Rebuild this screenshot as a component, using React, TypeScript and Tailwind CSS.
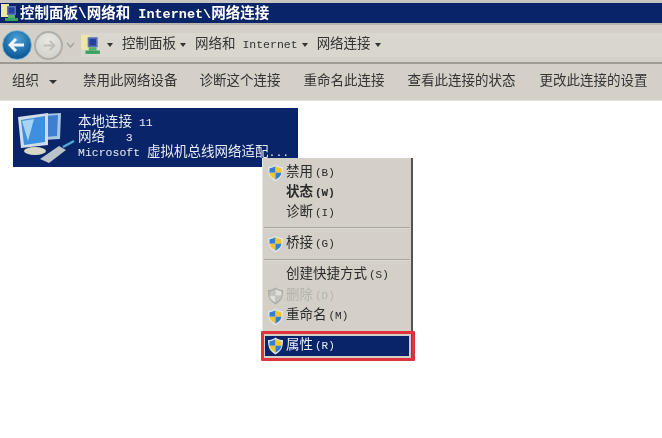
import React from "react";

const cjk = "font-['Liberation_Mono','Noto_Sans_CJK_SC',monospace]";

function Shield({ gray = false }: { gray?: boolean }) {
  const a = gray ? "#c4c2bc" : "#2f7fd6";
  const b = gray ? "#e0dfda" : "#f4c430";
  return (
    <svg width="17" height="18" viewBox="0 0 17 18" className="shrink-0 -ml-[1px]">
      <path d="M8.5 .5 C6 2.5 3.5 3 1 3 C1 9 2 14 8.5 17.5 C15 14 16 9 16 3 C13.5 3 11 2.5 8.5 .5Z" fill={gray ? "#aaa8a2" : "#dfe6ee"} />
      <path d="M8.5 2 C6.5 3.5 4.5 4 2.5 4.2 L2.5 8.8 L8.5 8.8Z" fill={a} />
      <path d="M8.5 2 C10.5 3.5 12.5 4 14.5 4.2 L14.5 8.8 L8.5 8.8Z" fill={b} />
      <path d="M2.6 8.8 L8.5 8.8 L8.5 15.8 C4.5 13.5 3 11.5 2.6 8.8Z" fill={b} />
      <path d="M14.4 8.8 L8.5 8.8 L8.5 15.8 C12.5 13.5 14 11.5 14.4 8.8Z" fill={a} />
    </svg>
  );
}

function NetIcon({ size }: { size: number }) {
  return (
    <svg width={size} height={size} viewBox="0 0 18 18" className="shrink-0">
      <rect x="0" y="0" width="8" height="13" fill="#ece6a8" />
      <rect x="6" y="2" width="9" height="9" fill="#5c72b0" />
      <rect x="7.5" y="3.5" width="6" height="6" fill="#2340a0" />
      <rect x="7" y="11" width="7" height="3" fill="#58b070" />
      <rect x="4" y="14" width="13" height="3" fill="#38a060" />
    </svg>
  );
}

function Arrow({ wide }: { wide?: boolean }) {
  return <span className={`inline-block w-0 h-0 border-t-[#333] ${wide ? "border-x-[4px] border-x-transparent border-t-[4px]" : "border-x-[3px] border-x-transparent border-t-[4px]"}`} />;
}

function AddrArrow() {
  return <span className="flex ml-[4px] mr-[9px]"><Arrow /></span>;
}

function MenuRow({ label, hot, shield, gray, bold, active, h = 20 }: { label: string; hot: string; shield?: boolean; gray?: boolean; bold?: boolean; active?: boolean; h?: number }) {
  return (
    <div
      className={`flex items-center pl-[3px] text-[13.5px] mx-[2px] ${active ? "bg-[#0a246a] text-[#e8ecf4]" : gray ? "text-[#b4b2ac]" : "text-[#2a2a2a]"} ${bold ? "font-bold" : ""}`}
      style={{ height: h }}
    >
      <span className="w-[18px] flex">{shield && <Shield gray={gray} />}</span>
      <span>{label}</span>
      <span className="ml-[2px] text-[11px]">{hot}</span>
    </div>
  );
}

function Sep() {
  return <div className="h-[2px] mx-[1px] my-[4px] bg-[#a8a69f] border-b border-white/60" />;
}

export default function App() {
  return (
    <div className={`relative w-[662px] h-[438px] overflow-hidden bg-white blur-[0.5px] ${cjk}`}>
      <div className="h-[3px] bg-[#c8c6c0]" />
      <div className="h-[20px] bg-[#0a246a] flex items-center pl-[1px] gap-[1px] text-white text-[14.5px] font-bold whitespace-pre">
        <NetIcon size={18} />
        <span className="pt-[3px]">控制面板\网络和<span className="text-[13.5px]"> Internet\</span>网络连接</span>
      </div>
      <div className="h-[41px] bg-[#d4d0c8] border-t-[2px] border-[#b8b5ad] border-b-[2px] border-b-[#9c9a93] flex items-center pl-[2px] pt-[3px]">
        <div className="w-[30px] h-[30px] rounded-full bg-[radial-gradient(circle_at_50%_30%,#4fa3d8,#0f5f9c_70%,#0a4a80)] border border-[#7fb0d0] flex items-center justify-center">
          <svg width="18" height="14" viewBox="0 0 18 14">
            <path d="M8 1 L2 7 L8 13 M2 7 H16" stroke="#f2f6fa" strokeWidth="3" fill="none" />
          </svg>
        </div>
        <div className="ml-[2px] w-[29px] h-[29px] rounded-full bg-[radial-gradient(circle_at_50%_30%,#e8e7e2,#cfcdc7)] border-[2px] border-[#b0aea8] flex items-center justify-center">
          <svg width="14" height="11" viewBox="0 0 18 14">
            <path d="M10 1 L16 7 L10 13 M16 7 H2" stroke="#c0beb8" strokeWidth="2.5" fill="none" />
          </svg>
        </div>
        <svg width="9" height="6" viewBox="0 0 9 6" className="ml-[3px] mr-[6px]">
          <path d="M1 1 L4.5 5 L8 1" stroke="#a6a49e" fill="none" strokeWidth="1.5" />
        </svg>
        <div className="flex items-center text-[13.5px] text-[#333] whitespace-pre h-[24px] flex-1 bg-[#d9d6ce]">
          <NetIcon size={20} />
          <span className="ml-[2px] flex items-center">
            <AddrArrow /><span>控制面板</span><AddrArrow /><span>网络和<span className="text-[11.5px]"> Internet</span></span><AddrArrow /><span>网络连接</span><AddrArrow />
          </span>
        </div>
      </div>
      <div className="h-[37px] bg-[#d4d0c8] border-b border-[#e4e2dc] flex items-center pl-[12px] text-[13.5px] text-[#333] whitespace-pre">
        <span>组织</span>
        <span className="ml-[10px] mr-[26px] flex"><Arrow wide /></span>
        <span className="mr-[22px]">禁用此网络设备</span>
        <span className="mr-[23px]">诊断这个连接</span>
        <span className="mr-[23px]">重命名此连接</span>
        <span className="mr-[24px]">查看此连接的状态</span>
        <span>更改此连接的设置</span>
      </div>
      <div className="ml-[13px] mt-[7px] w-[285px] h-[59px] bg-[#0a246a] flex items-center pl-[4px] text-[#e8ecf4] text-[13.5px]">
        <svg width="58" height="52" viewBox="0 0 58 52" className="shrink-0">
          <path d="M26 2 L44 1 L43 27 L26 28Z" fill="#a8c8e0" />
          <path d="M28 4 L41 3 L40 24 L28 25Z" fill="#3f7fd0" />
          <path d="M1 5 L31 1 L31 33 L4 36Z" fill="#d0dde8" />
          <path d="M4 8 L28 4 L28 30 L7 33Z" fill="#3f8fe0" />
          <path d="M5 9 L17 7 L11 29Z" fill="#a8d4f4" />
          <ellipse cx="18" cy="39" rx="11" ry="4" fill="#d8d8c8" />
          <path d="M23 47 L42 34 L49 38 L32 51Z" fill="#b8c4c8" />
          <path d="M46 35 L57 29" stroke="#4fa8d8" strokeWidth="2.5" />
        </svg>
        <div className="ml-[3px] leading-[15px] whitespace-pre">
          <div>本地连接<span className="text-[11.5px]"> 11</span></div>
          <div>网络<span className="text-[11.5px]">   3</span></div>
          <div><span className="text-[11.5px]">Microsoft </span>虚拟机总线网络适配<span className="text-[11.5px]">...</span></div>
        </div>
      </div>
      <div className="absolute left-[262px] top-[158px] w-[151px] pt-[5px] bg-[#d4d0c8] border-r-[2px] border-r-[#55534e] border-l border-l-[#e8e6e0]">
        <MenuRow label="禁用" hot="(B)" shield />
        <MenuRow label="状态" hot="(W)" bold />
        <MenuRow label="诊断" hot="(I)" h={20} />
        <Sep />
        <MenuRow label="桥接" hot="(G)" shield h={22} />
        <Sep />
        <MenuRow label="创建快捷方式" hot="(S)" h={21} />
        <MenuRow label="删除" hot="(D)" shield gray h={20} />
        <MenuRow label="重命名" hot="(M)" shield h={21} />
        <div className="h-[9px]" />
        <MenuRow label="属性" hot="(R)" shield active h={20} />
        <div className="h-[3px]" />
      </div>
      <div className="absolute left-[261px] top-[331px] w-[154px] h-[30px] border-[3px] border-[#e0343c] rounded-[1px]" />
    </div>
  );
}
